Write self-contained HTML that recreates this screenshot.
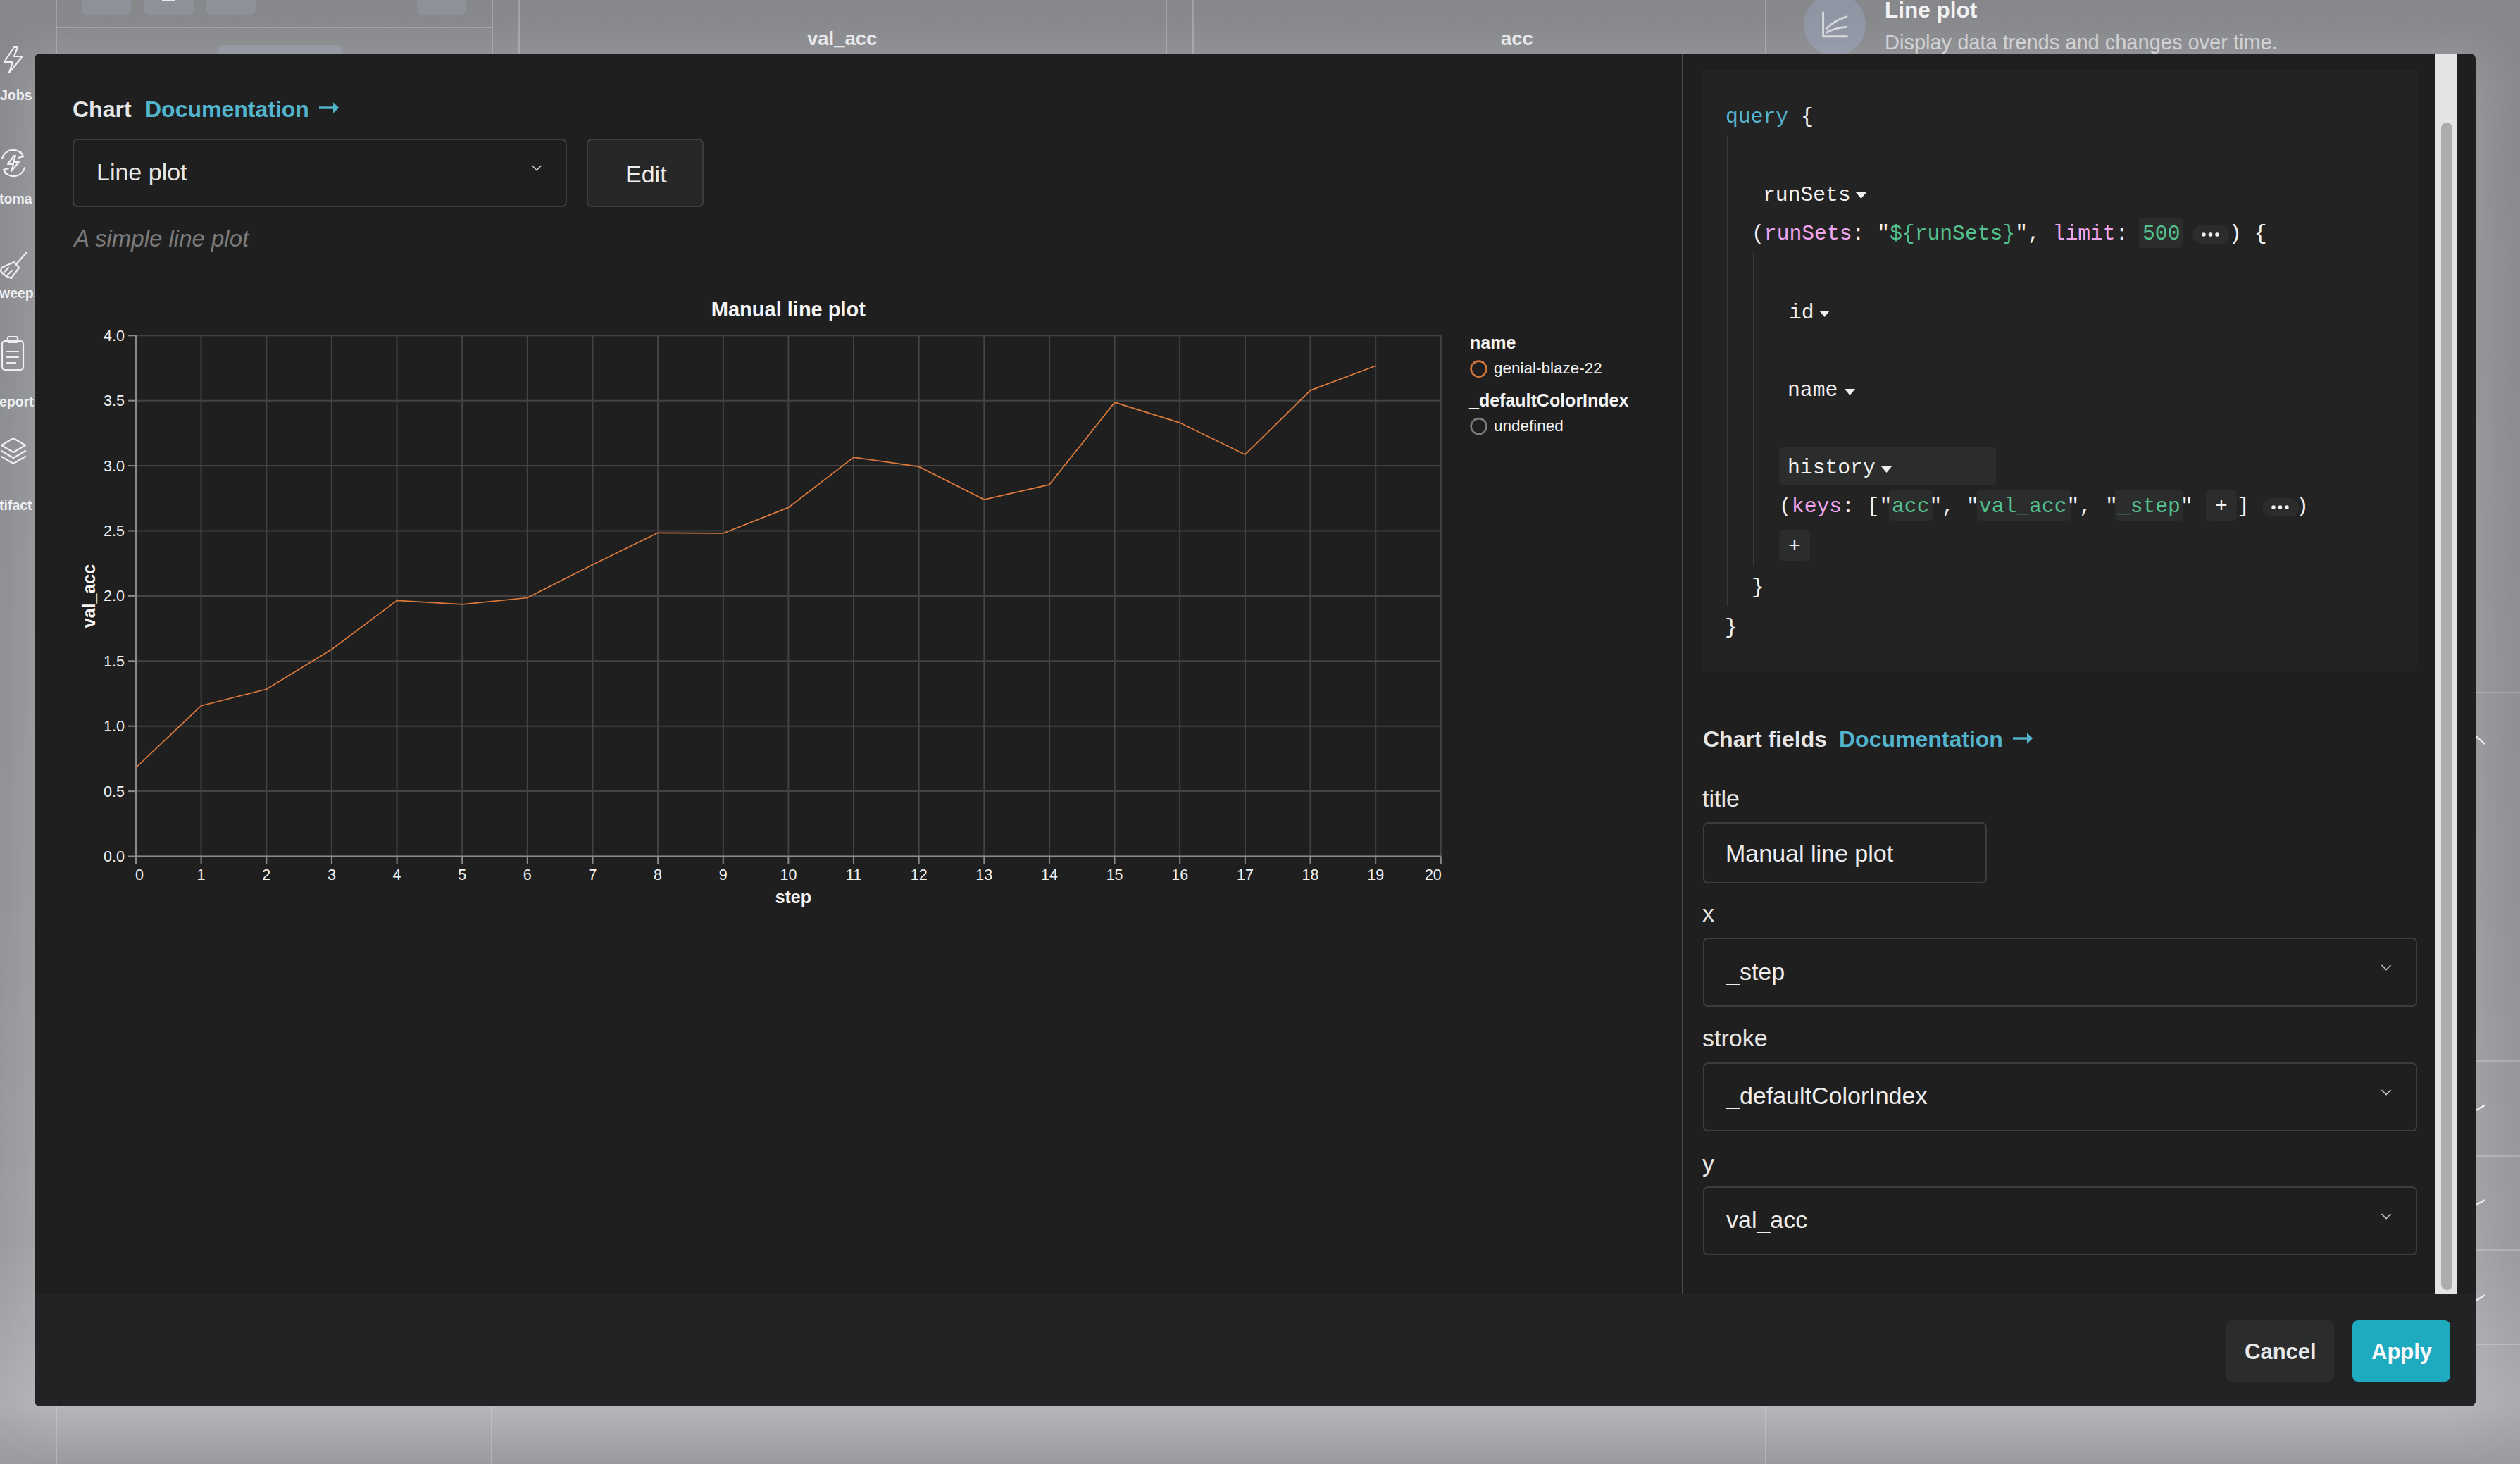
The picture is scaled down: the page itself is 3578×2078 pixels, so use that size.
<!DOCTYPE html>
<html><head><meta charset="utf-8"><title>Chart editor</title>
<style>
html,body{margin:0;padding:0;}
body{width:3578px;height:2078px;overflow:hidden;position:relative;font-family:'Liberation Sans', sans-serif;
background:linear-gradient(to bottom,#87888c 0%,#8b8c90 30%,#909195 60%,#999a9e 85%,#abacb0 96%,#9a9b9f 100%);}
.t{position:absolute;line-height:1;white-space:pre;}
.r{position:absolute;}
.bgpage{position:absolute;left:0;top:0;width:3578px;height:2078px;}
</style></head><body>
<div class="bgpage"><div class="r" style="left:79.0px;top:0.0px;width:2.0px;height:76.0px;background:rgba(230,232,238,0.28);border-radius:0px;"></div><div class="r" style="left:698.0px;top:0.0px;width:2.0px;height:76.0px;background:rgba(230,232,238,0.28);border-radius:0px;"></div><div class="r" style="left:736.0px;top:0.0px;width:2.0px;height:76.0px;background:rgba(230,232,238,0.28);border-radius:0px;"></div><div class="r" style="left:1655.0px;top:0.0px;width:2.0px;height:76.0px;background:rgba(230,232,238,0.28);border-radius:0px;"></div><div class="r" style="left:1693.0px;top:0.0px;width:2.0px;height:76.0px;background:rgba(230,232,238,0.28);border-radius:0px;"></div><div class="r" style="left:2506.0px;top:0.0px;width:2.0px;height:76.0px;background:rgba(230,232,238,0.28);border-radius:0px;"></div><div class="r" style="left:79.0px;top:1996.0px;width:2.0px;height:82.0px;background:rgba(230,232,238,0.28);border-radius:0px;"></div><div class="r" style="left:697.0px;top:1996.0px;width:2.0px;height:82.0px;background:rgba(230,232,238,0.28);border-radius:0px;"></div><div class="r" style="left:2506.0px;top:1996.0px;width:2.0px;height:82.0px;background:rgba(230,232,238,0.28);border-radius:0px;"></div><div class="r" style="left:79.0px;top:38.0px;width:619.0px;height:2.0px;background:rgba(230,232,238,0.28);border-radius:0px;"></div><div class="r" style="left:116.0px;top:-10.0px;width:70.0px;height:31.0px;background:rgba(160,165,185,0.32);border-radius:8px;"></div><div class="r" style="left:204.0px;top:-10.0px;width:71.0px;height:31.0px;background:rgba(160,165,185,0.32);border-radius:8px;"></div><div class="r" style="left:292.0px;top:-10.0px;width:71.0px;height:31.0px;background:rgba(160,165,185,0.32);border-radius:8px;"></div><div class="r" style="left:592.0px;top:-10.0px;width:69.0px;height:31.0px;background:rgba(160,165,185,0.32);border-radius:8px;"></div><div class="r" style="left:230.0px;top:-2.0px;width:18.0px;height:4.0px;background:#e8e8e8;border-radius:0px;"></div><div class="r" style="left:309.0px;top:64.0px;width:177.0px;height:26.0px;background:rgba(160,165,185,0.35);border-radius:8px;"></div><div class="t" style="left:1146.0px;top:40.7px;font-size:27.5px;color:#e6e7ea;font-weight:bold;font-style:normal;font-family:'Liberation Sans', sans-serif;">val_acc</div><div class="t" style="left:2131.0px;top:40.7px;font-size:27.5px;color:#e6e7ea;font-weight:bold;font-style:normal;font-family:'Liberation Sans', sans-serif;">acc</div><svg class="r" style="left:2561px;top:-9px" width="88" height="88" viewBox="0 0 88 88"><circle cx="44" cy="44" r="44" fill="#8f95a3"/><path d="M27.6 26.8 V60.7 H61.5 M32.6 49.6 C 40 42, 48 36, 60.9 32.8 M32.6 55 C 42 50, 50 48, 60.9 47.4" fill="none" stroke="#d6d8dc" stroke-width="2.9" stroke-linecap="round" stroke-linejoin="round"/></svg><div class="t" style="left:2676.0px;top:-0.7px;font-size:31.5px;color:#f2f2f4;font-weight:bold;font-style:normal;font-family:'Liberation Sans', sans-serif;">Line plot</div><div class="t" style="left:2676.0px;top:46.1px;font-size:29px;color:#cfd0d3;font-weight:normal;font-style:normal;font-family:'Liberation Sans', sans-serif;">Display data trends and changes over time.</div><div class="t" style="left:0.0px;top:126.0px;font-size:19.5px;color:#eeeff1;font-weight:bold;font-style:normal;font-family:'Liberation Sans', sans-serif;">Jobs</div><div class="t" style="left:-1.0px;top:272.5px;font-size:19.5px;color:#eeeff1;font-weight:bold;font-style:normal;font-family:'Liberation Sans', sans-serif;">toma</div><div class="t" style="left:-1.0px;top:406.9px;font-size:19.5px;color:#eeeff1;font-weight:bold;font-style:normal;font-family:'Liberation Sans', sans-serif;">weeps</div><div class="t" style="left:-1.0px;top:561.2px;font-size:19.5px;color:#eeeff1;font-weight:bold;font-style:normal;font-family:'Liberation Sans', sans-serif;">eports</div><div class="t" style="left:-1.0px;top:707.5px;font-size:19.5px;color:#eeeff1;font-weight:bold;font-style:normal;font-family:'Liberation Sans', sans-serif;">tifact</div><svg class="r" style="left:0;top:60px" width="50" height="620" viewBox="0 60 50 620" fill="none" stroke="#eeeff1" stroke-width="2.2" stroke-linejoin="round" stroke-linecap="round"><path d="M20 67 L6 88 H18 L13 103 L32 80 H20 L25 67 Z"/><path d="M3 225 A16 16 0 0 1 33 222 M35 238 A16 16 0 0 1 5 241 M29 215 L33 222 L26 224 M9 248 L5 241 L12 239"/><path d="M20 221 L11 233 H19 L16 243 L27 230 H19 L22 221 Z"/><path d="M38 358 L22 376 M2 380 L20 372 L27 380 L16 395 Q6 392 1 385 Z M6 386 L12 380 M11 390 L17 384"/><rect x="3" y="484" width="30" height="41" rx="4"/><rect x="11" y="478" width="14" height="8" rx="2"/><path d="M10 499 H26 M10 507 H26 M10 515 H22"/><path d="M19 622 L36 632 L19 642 L2 632 Z M2 640 L19 650 L36 640 M2 648 L19 658 L36 648"/></svg><div class="r" style="left:3515.0px;top:982.0px;width:63.0px;height:2.0px;background:rgba(230,232,238,0.28);border-radius:0px;"></div><div class="r" style="left:3515.0px;top:1505.0px;width:63.0px;height:2.0px;background:rgba(230,232,238,0.28);border-radius:0px;"></div><div class="r" style="left:3515.0px;top:1640.0px;width:63.0px;height:2.0px;background:rgba(230,232,238,0.28);border-radius:0px;"></div><div class="r" style="left:3515.0px;top:1773.0px;width:63.0px;height:2.0px;background:rgba(230,232,238,0.28);border-radius:0px;"></div><div class="r" style="left:3515.0px;top:1907.0px;width:63.0px;height:2.0px;background:rgba(230,232,238,0.28);border-radius:0px;"></div><svg class="r" style="left:3515px;top:1030px" width="63" height="830" viewBox="3515 1030 63 830" fill="none" stroke="#eeeff1" stroke-width="2.4" stroke-linecap="round" stroke-linejoin="round"><path d="M3515 1049 L3517 1046 L3527 1055.5"/><path d="M3515.5 1576 L3517 1575 L3527.5 1569"/><path d="M3515.5 1710.5 L3517 1709.5 L3527.5 1703.5"/><path d="M3515.5 1846 L3517 1845 L3527.5 1838.5"/></svg></div><div class="r" style="left:49.0px;top:76.0px;width:3466.0px;height:1920.0px;background:#1f1f1f;border-radius:8px;box-shadow:0 14px 70px 16px rgba(255,255,255,0.16);"></div><div class="r" style="left:49.0px;top:1837.0px;width:3466.0px;height:159.0px;background:#222325;border-radius:0px;border-radius:0 0 8px 8px;"></div><div class="r" style="left:49.0px;top:1836.0px;width:3466.0px;height:1.0px;background:#565656;border-radius:0px;"></div><div class="r" style="left:2388.0px;top:76.0px;width:2.0px;height:1761.0px;background:#4a4a4a;border-radius:0px;"></div><div class="t" style="left:103.0px;top:138.9px;font-size:32px;color:#e6e6e6;font-weight:bold;font-style:normal;font-family:'Liberation Sans', sans-serif;">Chart</div><div class="t" style="left:206.0px;top:138.9px;font-size:32px;color:#52b4cd;font-weight:bold;font-style:normal;font-family:'Liberation Sans', sans-serif;">Documentation</div><svg class="r" style="left:453px;top:145.3px" width="29" height="16" viewBox="0 0 29 16"><rect x="0" y="6.3" width="21" height="3.4" fill="#52b4cd"/><path d="M20 0.3 L28.2 8 L20 15.7 Z" fill="#52b4cd"/></svg><div class="r" style="left:103.0px;top:197.0px;width:702.0px;height:97.0px;background:#1f1f1f;border:2px solid #3d3d3d;box-sizing:border-box;border-radius:7px;"></div><div class="t" style="left:137.0px;top:226.6px;font-size:34px;color:#e8e8e8;font-weight:normal;font-style:normal;font-family:'Liberation Sans', sans-serif;">Line plot</div><svg class="r" style="left:750px;top:228px" width="24" height="20" viewBox="0 0 24 20"><path d="M5.5 7 L12 13.5 L18.5 7" fill="none" stroke="#c8c8c8" stroke-width="1.6"/></svg><div class="r" style="left:833.0px;top:197.0px;width:166.0px;height:97.0px;background:#262828;border:2px solid #3d3d3d;box-sizing:border-box;border-radius:7px;"></div><div class="t" style="left:888.0px;top:229.6px;font-size:34px;color:#eeeeee;font-weight:normal;font-style:normal;font-family:'Liberation Sans', sans-serif;">Edit</div><div class="t" style="left:105.0px;top:322.1px;font-size:33px;color:#7a7a7a;font-weight:normal;font-style:italic;font-family:'Liberation Sans', sans-serif;">A simple line plot</div><svg class="r" style="left:0;top:0" width="2389" height="1400" viewBox="0 0 2389 1400"><line x1="193.0" y1="476" x2="193.0" y2="1215.5" stroke="#434343" stroke-width="2"/><line x1="285.6" y1="476" x2="285.6" y2="1215.5" stroke="#434343" stroke-width="2"/><line x1="378.3" y1="476" x2="378.3" y2="1215.5" stroke="#434343" stroke-width="2"/><line x1="470.9" y1="476" x2="470.9" y2="1215.5" stroke="#434343" stroke-width="2"/><line x1="563.6" y1="476" x2="563.6" y2="1215.5" stroke="#434343" stroke-width="2"/><line x1="656.2" y1="476" x2="656.2" y2="1215.5" stroke="#434343" stroke-width="2"/><line x1="748.8" y1="476" x2="748.8" y2="1215.5" stroke="#434343" stroke-width="2"/><line x1="841.5" y1="476" x2="841.5" y2="1215.5" stroke="#434343" stroke-width="2"/><line x1="934.1" y1="476" x2="934.1" y2="1215.5" stroke="#434343" stroke-width="2"/><line x1="1026.8" y1="476" x2="1026.8" y2="1215.5" stroke="#434343" stroke-width="2"/><line x1="1119.4" y1="476" x2="1119.4" y2="1215.5" stroke="#434343" stroke-width="2"/><line x1="1212.0" y1="476" x2="1212.0" y2="1215.5" stroke="#434343" stroke-width="2"/><line x1="1304.7" y1="476" x2="1304.7" y2="1215.5" stroke="#434343" stroke-width="2"/><line x1="1397.3" y1="476" x2="1397.3" y2="1215.5" stroke="#434343" stroke-width="2"/><line x1="1490.0" y1="476" x2="1490.0" y2="1215.5" stroke="#434343" stroke-width="2"/><line x1="1582.6" y1="476" x2="1582.6" y2="1215.5" stroke="#434343" stroke-width="2"/><line x1="1675.2" y1="476" x2="1675.2" y2="1215.5" stroke="#434343" stroke-width="2"/><line x1="1767.9" y1="476" x2="1767.9" y2="1215.5" stroke="#434343" stroke-width="2"/><line x1="1860.5" y1="476" x2="1860.5" y2="1215.5" stroke="#434343" stroke-width="2"/><line x1="1953.2" y1="476" x2="1953.2" y2="1215.5" stroke="#434343" stroke-width="2"/><line x1="2045.8" y1="476" x2="2045.8" y2="1215.5" stroke="#434343" stroke-width="2"/><line x1="193" y1="1215.5" x2="2046" y2="1215.5" stroke="#434343" stroke-width="2"/><line x1="193" y1="1123.1" x2="2046" y2="1123.1" stroke="#434343" stroke-width="2"/><line x1="193" y1="1030.7" x2="2046" y2="1030.7" stroke="#434343" stroke-width="2"/><line x1="193" y1="938.3" x2="2046" y2="938.3" stroke="#434343" stroke-width="2"/><line x1="193" y1="845.9" x2="2046" y2="845.9" stroke="#434343" stroke-width="2"/><line x1="193" y1="753.5" x2="2046" y2="753.5" stroke="#434343" stroke-width="2"/><line x1="193" y1="661.1" x2="2046" y2="661.1" stroke="#434343" stroke-width="2"/><line x1="193" y1="568.7" x2="2046" y2="568.7" stroke="#434343" stroke-width="2"/><line x1="193" y1="476.3" x2="2046" y2="476.3" stroke="#434343" stroke-width="2"/><line x1="193" y1="475" x2="193" y2="1216.5" stroke="#8a8a8a" stroke-width="2"/><line x1="192" y1="1215.5" x2="2046" y2="1215.5" stroke="#8a8a8a" stroke-width="2"/><line x1="182" y1="1215.5" x2="193" y2="1215.5" stroke="#8a8a8a" stroke-width="2"/><text x="177" y="1223.0" text-anchor="end" font-family="Liberation Sans" font-size="21.5" fill="#f2f2f2">0.0</text><line x1="182" y1="1123.1" x2="193" y2="1123.1" stroke="#8a8a8a" stroke-width="2"/><text x="177" y="1130.6" text-anchor="end" font-family="Liberation Sans" font-size="21.5" fill="#f2f2f2">0.5</text><line x1="182" y1="1030.7" x2="193" y2="1030.7" stroke="#8a8a8a" stroke-width="2"/><text x="177" y="1038.2" text-anchor="end" font-family="Liberation Sans" font-size="21.5" fill="#f2f2f2">1.0</text><line x1="182" y1="938.3" x2="193" y2="938.3" stroke="#8a8a8a" stroke-width="2"/><text x="177" y="945.8" text-anchor="end" font-family="Liberation Sans" font-size="21.5" fill="#f2f2f2">1.5</text><line x1="182" y1="845.9" x2="193" y2="845.9" stroke="#8a8a8a" stroke-width="2"/><text x="177" y="853.4" text-anchor="end" font-family="Liberation Sans" font-size="21.5" fill="#f2f2f2">2.0</text><line x1="182" y1="753.5" x2="193" y2="753.5" stroke="#8a8a8a" stroke-width="2"/><text x="177" y="761.0" text-anchor="end" font-family="Liberation Sans" font-size="21.5" fill="#f2f2f2">2.5</text><line x1="182" y1="661.1" x2="193" y2="661.1" stroke="#8a8a8a" stroke-width="2"/><text x="177" y="668.6" text-anchor="end" font-family="Liberation Sans" font-size="21.5" fill="#f2f2f2">3.0</text><line x1="182" y1="568.7" x2="193" y2="568.7" stroke="#8a8a8a" stroke-width="2"/><text x="177" y="576.2" text-anchor="end" font-family="Liberation Sans" font-size="21.5" fill="#f2f2f2">3.5</text><line x1="182" y1="476.3" x2="193" y2="476.3" stroke="#8a8a8a" stroke-width="2"/><text x="177" y="483.8" text-anchor="end" font-family="Liberation Sans" font-size="21.5" fill="#f2f2f2">4.0</text><line x1="193.0" y1="1215.5" x2="193.0" y2="1226" stroke="#8a8a8a" stroke-width="2"/><text x="192.0" y="1249" text-anchor="start" font-family="Liberation Sans" font-size="21.5" fill="#f2f2f2">0</text><line x1="285.6" y1="1215.5" x2="285.6" y2="1226" stroke="#8a8a8a" stroke-width="2"/><text x="285.6" y="1249" text-anchor="middle" font-family="Liberation Sans" font-size="21.5" fill="#f2f2f2">1</text><line x1="378.3" y1="1215.5" x2="378.3" y2="1226" stroke="#8a8a8a" stroke-width="2"/><text x="378.3" y="1249" text-anchor="middle" font-family="Liberation Sans" font-size="21.5" fill="#f2f2f2">2</text><line x1="470.9" y1="1215.5" x2="470.9" y2="1226" stroke="#8a8a8a" stroke-width="2"/><text x="470.9" y="1249" text-anchor="middle" font-family="Liberation Sans" font-size="21.5" fill="#f2f2f2">3</text><line x1="563.6" y1="1215.5" x2="563.6" y2="1226" stroke="#8a8a8a" stroke-width="2"/><text x="563.6" y="1249" text-anchor="middle" font-family="Liberation Sans" font-size="21.5" fill="#f2f2f2">4</text><line x1="656.2" y1="1215.5" x2="656.2" y2="1226" stroke="#8a8a8a" stroke-width="2"/><text x="656.2" y="1249" text-anchor="middle" font-family="Liberation Sans" font-size="21.5" fill="#f2f2f2">5</text><line x1="748.8" y1="1215.5" x2="748.8" y2="1226" stroke="#8a8a8a" stroke-width="2"/><text x="748.8" y="1249" text-anchor="middle" font-family="Liberation Sans" font-size="21.5" fill="#f2f2f2">6</text><line x1="841.5" y1="1215.5" x2="841.5" y2="1226" stroke="#8a8a8a" stroke-width="2"/><text x="841.5" y="1249" text-anchor="middle" font-family="Liberation Sans" font-size="21.5" fill="#f2f2f2">7</text><line x1="934.1" y1="1215.5" x2="934.1" y2="1226" stroke="#8a8a8a" stroke-width="2"/><text x="934.1" y="1249" text-anchor="middle" font-family="Liberation Sans" font-size="21.5" fill="#f2f2f2">8</text><line x1="1026.8" y1="1215.5" x2="1026.8" y2="1226" stroke="#8a8a8a" stroke-width="2"/><text x="1026.8" y="1249" text-anchor="middle" font-family="Liberation Sans" font-size="21.5" fill="#f2f2f2">9</text><line x1="1119.4" y1="1215.5" x2="1119.4" y2="1226" stroke="#8a8a8a" stroke-width="2"/><text x="1119.4" y="1249" text-anchor="middle" font-family="Liberation Sans" font-size="21.5" fill="#f2f2f2">10</text><line x1="1212.0" y1="1215.5" x2="1212.0" y2="1226" stroke="#8a8a8a" stroke-width="2"/><text x="1212.0" y="1249" text-anchor="middle" font-family="Liberation Sans" font-size="21.5" fill="#f2f2f2">11</text><line x1="1304.7" y1="1215.5" x2="1304.7" y2="1226" stroke="#8a8a8a" stroke-width="2"/><text x="1304.7" y="1249" text-anchor="middle" font-family="Liberation Sans" font-size="21.5" fill="#f2f2f2">12</text><line x1="1397.3" y1="1215.5" x2="1397.3" y2="1226" stroke="#8a8a8a" stroke-width="2"/><text x="1397.3" y="1249" text-anchor="middle" font-family="Liberation Sans" font-size="21.5" fill="#f2f2f2">13</text><line x1="1490.0" y1="1215.5" x2="1490.0" y2="1226" stroke="#8a8a8a" stroke-width="2"/><text x="1490.0" y="1249" text-anchor="middle" font-family="Liberation Sans" font-size="21.5" fill="#f2f2f2">14</text><line x1="1582.6" y1="1215.5" x2="1582.6" y2="1226" stroke="#8a8a8a" stroke-width="2"/><text x="1582.6" y="1249" text-anchor="middle" font-family="Liberation Sans" font-size="21.5" fill="#f2f2f2">15</text><line x1="1675.2" y1="1215.5" x2="1675.2" y2="1226" stroke="#8a8a8a" stroke-width="2"/><text x="1675.2" y="1249" text-anchor="middle" font-family="Liberation Sans" font-size="21.5" fill="#f2f2f2">16</text><line x1="1767.9" y1="1215.5" x2="1767.9" y2="1226" stroke="#8a8a8a" stroke-width="2"/><text x="1767.9" y="1249" text-anchor="middle" font-family="Liberation Sans" font-size="21.5" fill="#f2f2f2">17</text><line x1="1860.5" y1="1215.5" x2="1860.5" y2="1226" stroke="#8a8a8a" stroke-width="2"/><text x="1860.5" y="1249" text-anchor="middle" font-family="Liberation Sans" font-size="21.5" fill="#f2f2f2">18</text><line x1="1953.2" y1="1215.5" x2="1953.2" y2="1226" stroke="#8a8a8a" stroke-width="2"/><text x="1953.2" y="1249" text-anchor="middle" font-family="Liberation Sans" font-size="21.5" fill="#f2f2f2">19</text><line x1="2045.8" y1="1215.5" x2="2045.8" y2="1226" stroke="#8a8a8a" stroke-width="2"/><text x="2046.8" y="1249" text-anchor="end" font-family="Liberation Sans" font-size="21.5" fill="#f2f2f2">20</text><polyline points="193.0,1089.5 285.6,1001.7 378.3,978.2 470.9,921.7 563.6,852.4 656.2,857.9 748.8,848.5 841.5,801.5 934.1,756.3 1026.8,757.0 1119.4,720.4 1212.0,649.1 1304.7,662.4 1397.3,709.1 1490.0,687.9 1582.6,571.1 1675.2,600.1 1767.9,645.2 1860.5,554.1 1953.2,519.2" fill="none" stroke="#dc7a3c" stroke-width="1.7"/><text x="1119.4" y="449" text-anchor="middle" font-family="Liberation Sans" font-weight="bold" font-size="29" fill="#f5f5f5">Manual line plot</text><text x="1119.4" y="1282" text-anchor="middle" font-family="Liberation Sans" font-weight="bold" font-size="25" fill="#f5f5f5">_step</text><text transform="translate(135,846) rotate(-90)" x="0" y="0" text-anchor="middle" font-family="Liberation Sans" font-weight="bold" font-size="25" fill="#f5f5f5">val_acc</text><text x="2087" y="495" font-family="Liberation Sans" font-weight="bold" font-size="25" fill="#f5f5f5">name</text><circle cx="2099.6" cy="523.6" r="11" fill="none" stroke="#d2773a" stroke-width="2.6"/><text x="2121" y="529.7" font-family="Liberation Sans" font-size="22.5" fill="#f2f2f2">genial-blaze-22</text><text x="2086" y="577.3" font-family="Liberation Sans" font-weight="bold" font-size="25" fill="#f5f5f5">_defaultColorIndex</text><circle cx="2099.6" cy="605.1" r="11" fill="none" stroke="#7d7d7d" stroke-width="2.6"/><text x="2121" y="611.5" font-family="Liberation Sans" font-size="22.5" fill="#f2f2f2">undefined</text></svg><div class="r" style="left:2417.0px;top:99.0px;width:1015.0px;height:853.0px;background:#232323;border-radius:0px;"></div><div class="r" style="left:2452.0px;top:191.0px;width:2.0px;height:669.0px;background:#3a3a3a;border-radius:0px;"></div><div class="r" style="left:2489.0px;top:358.0px;width:2.0px;height:444.0px;background:#3a3a3a;border-radius:0px;"></div><div class="t" style="left:2450.0px;top:152.2px;font-size:29.7px;color:#f2f2f2;font-weight:normal;font-style:normal;font-family:'Liberation Mono', monospace;white-space:pre;"><span style="color:#55b3d3">query</span> {</div><div class="t" style="left:2503.0px;top:262.8px;font-size:29.7px;color:#f2f2f2;font-weight:normal;font-style:normal;font-family:'Liberation Mono', monospace;white-space:pre;">runSets</div><svg class="r" style="left:2635px;top:273px" width="15" height="9" viewBox="0 0 15 9"><path d="M0 0 H15 L7.5 9 Z" fill="#f0f0f0"/></svg><div class="t" style="left:2487.0px;top:318.2px;font-size:29.7px;color:#f2f2f2;font-weight:normal;font-style:normal;font-family:'Liberation Mono', monospace;white-space:pre;">(<span style="color:#f0a6ee">runSets</span>: "<span style="color:#55c08e">${runSets}</span>", <span style="color:#f0a6ee">limit</span>:</div><div class="r" style="left:3037.0px;top:308.5px;width:62.0px;height:43.0px;background:#2b2c2c;border-radius:5px;"></div><div class="t" style="left:3042.0px;top:318.2px;font-size:29.7px;color:#f2f2f2;font-weight:normal;font-style:normal;font-family:'Liberation Mono', monospace;white-space:pre;"><span style="color:#55c08e">500</span></div><div class="r" style="left:3113.0px;top:320.0px;width:52.0px;height:26.0px;background:#2b2c2c;border-radius:13px;"></div><svg class="r" style="left:3113px;top:320px" width="52" height="26" viewBox="0 0 52 26"><circle cx="16" cy="13" r="2.8" fill="#f0f0f0"/><circle cx="25.5" cy="13" r="2.8" fill="#f0f0f0"/><circle cx="35" cy="13" r="2.8" fill="#f0f0f0"/></svg><div class="t" style="left:3165.0px;top:318.2px;font-size:29.7px;color:#f2f2f2;font-weight:normal;font-style:normal;font-family:'Liberation Mono', monospace;white-space:pre;">) {</div><div class="t" style="left:2540.0px;top:429.5px;font-size:29.7px;color:#f2f2f2;font-weight:normal;font-style:normal;font-family:'Liberation Mono', monospace;white-space:pre;">id</div><svg class="r" style="left:2583px;top:441px" width="15" height="9" viewBox="0 0 15 9"><path d="M0 0 H15 L7.5 9 Z" fill="#f0f0f0"/></svg><div class="t" style="left:2538.0px;top:540.2px;font-size:29.7px;color:#f2f2f2;font-weight:normal;font-style:normal;font-family:'Liberation Mono', monospace;white-space:pre;">name</div><svg class="r" style="left:2619px;top:552px" width="15" height="9" viewBox="0 0 15 9"><path d="M0 0 H15 L7.5 9 Z" fill="#f0f0f0"/></svg><div class="r" style="left:2526.0px;top:635.0px;width:308.0px;height:53.0px;background:#2b2c2c;border-radius:5px;"></div><div class="t" style="left:2538.0px;top:649.8px;font-size:29.7px;color:#f2f2f2;font-weight:normal;font-style:normal;font-family:'Liberation Mono', monospace;white-space:pre;">history</div><svg class="r" style="left:2671px;top:662px" width="15" height="9" viewBox="0 0 15 9"><path d="M0 0 H15 L7.5 9 Z" fill="#f0f0f0"/></svg><div class="r" style="left:2682.0px;top:695.0px;width:62.0px;height:43.5px;background:#2b2c2c;border-radius:5px;"></div><div class="r" style="left:2807.0px;top:695.0px;width:133.0px;height:43.5px;background:#2b2c2c;border-radius:5px;"></div><div class="r" style="left:3003.0px;top:695.0px;width:97.0px;height:43.5px;background:#2b2c2c;border-radius:5px;"></div><div class="r" style="left:3132.0px;top:695.0px;width:44.0px;height:43.5px;background:#2b2c2c;border-radius:5px;"></div><div class="t" style="left:2526.0px;top:705.2px;font-size:29.7px;color:#f2f2f2;font-weight:normal;font-style:normal;font-family:'Liberation Mono', monospace;white-space:pre;">(<span style="color:#f0a6ee">keys</span>: ["</div><div class="t" style="left:2686.0px;top:705.2px;font-size:29.7px;color:#f2f2f2;font-weight:normal;font-style:normal;font-family:'Liberation Mono', monospace;white-space:pre;"><span style="color:#55c08e">acc</span>",</div><div class="t" style="left:2792.0px;top:705.2px;font-size:29.7px;color:#f2f2f2;font-weight:normal;font-style:normal;font-family:'Liberation Mono', monospace;white-space:pre;">"<span style="color:#55c08e">val_acc</span>",</div><div class="t" style="left:2989.0px;top:705.2px;font-size:29.7px;color:#f2f2f2;font-weight:normal;font-style:normal;font-family:'Liberation Mono', monospace;white-space:pre;">"<span style="color:#55c08e">_step</span>"</div><div class="t" style="left:3145.0px;top:705.2px;font-size:29.7px;color:#f2f2f2;font-weight:normal;font-style:normal;font-family:'Liberation Mono', monospace;white-space:pre;">+</div><div class="t" style="left:3176.0px;top:705.2px;font-size:29.7px;color:#f2f2f2;font-weight:normal;font-style:normal;font-family:'Liberation Mono', monospace;white-space:pre;">]</div><div class="r" style="left:3212.0px;top:707.0px;width:52.0px;height:26.0px;background:#2b2c2c;border-radius:13px;"></div><svg class="r" style="left:3212px;top:707px" width="52" height="26" viewBox="0 0 52 26"><circle cx="16" cy="13" r="2.8" fill="#f0f0f0"/><circle cx="25.5" cy="13" r="2.8" fill="#f0f0f0"/><circle cx="35" cy="13" r="2.8" fill="#f0f0f0"/></svg><div class="t" style="left:3260.0px;top:705.2px;font-size:29.7px;color:#f2f2f2;font-weight:normal;font-style:normal;font-family:'Liberation Mono', monospace;white-space:pre;">)</div><div class="r" style="left:2526.0px;top:752.0px;width:44.0px;height:44.0px;background:#2b2c2c;border-radius:5px;"></div><div class="t" style="left:2539.0px;top:762.2px;font-size:29.7px;color:#f2f2f2;font-weight:normal;font-style:normal;font-family:'Liberation Mono', monospace;white-space:pre;">+</div><div class="t" style="left:2487.0px;top:820.2px;font-size:29.7px;color:#f2f2f2;font-weight:normal;font-style:normal;font-family:'Liberation Mono', monospace;white-space:pre;">}</div><div class="t" style="left:2449.0px;top:876.9px;font-size:29.7px;color:#f2f2f2;font-weight:normal;font-style:normal;font-family:'Liberation Mono', monospace;white-space:pre;">}</div><div class="t" style="left:2418.0px;top:1033.2px;font-size:32px;color:#e6e6e6;font-weight:bold;font-style:normal;font-family:'Liberation Sans', sans-serif;">Chart fields</div><div class="t" style="left:2611.0px;top:1033.2px;font-size:32px;color:#52b4cd;font-weight:bold;font-style:normal;font-family:'Liberation Sans', sans-serif;">Documentation</div><svg class="r" style="left:2858px;top:1039.6px" width="29" height="16" viewBox="0 0 29 16"><rect x="0" y="6.3" width="21" height="3.4" fill="#52b4cd"/><path d="M20 0.3 L28.2 8 L20 15.7 Z" fill="#52b4cd"/></svg><div class="t" style="left:2417.0px;top:1115.8px;font-size:34px;color:#e6e6e6;font-weight:normal;font-style:normal;font-family:'Liberation Sans', sans-serif;">title</div><div class="r" style="left:2418.0px;top:1166.5px;width:403.0px;height:87.0px;background:#1f1f1f;border:2px solid #3d3d3d;box-sizing:border-box;border-radius:7px;"></div><div class="t" style="left:2450.0px;top:1193.9px;font-size:34px;color:#eeeeee;font-weight:normal;font-style:normal;font-family:'Liberation Sans', sans-serif;">Manual line plot</div><div class="t" style="left:2417.0px;top:1279.1px;font-size:34px;color:#e6e6e6;font-weight:normal;font-style:normal;font-family:'Liberation Sans', sans-serif;">x</div><div class="r" style="left:2418.0px;top:1331.0px;width:1014.0px;height:98.0px;background:#1f1f1f;border:2px solid #3d3d3d;box-sizing:border-box;border-radius:7px;"></div><div class="t" style="left:2451.0px;top:1362.0px;font-size:34px;color:#eeeeee;font-weight:normal;font-style:normal;font-family:'Liberation Sans', sans-serif;">_step</div><svg class="r" style="left:3376px;top:1362.8px" width="24" height="20" viewBox="0 0 24 20"><path d="M5.5 7 L12 13.5 L18.5 7" fill="none" stroke="#c8c8c8" stroke-width="1.6"/></svg><div class="t" style="left:2417.0px;top:1456.2px;font-size:34px;color:#e6e6e6;font-weight:normal;font-style:normal;font-family:'Liberation Sans', sans-serif;">stroke</div><div class="r" style="left:2418.0px;top:1508.0px;width:1014.0px;height:98.0px;background:#1f1f1f;border:2px solid #3d3d3d;box-sizing:border-box;border-radius:7px;"></div><div class="t" style="left:2451.0px;top:1537.8px;font-size:34px;color:#eeeeee;font-weight:normal;font-style:normal;font-family:'Liberation Sans', sans-serif;">_defaultColorIndex</div><svg class="r" style="left:3376px;top:1539.8px" width="24" height="20" viewBox="0 0 24 20"><path d="M5.5 7 L12 13.5 L18.5 7" fill="none" stroke="#c8c8c8" stroke-width="1.6"/></svg><div class="t" style="left:2417.0px;top:1633.8px;font-size:34px;color:#e6e6e6;font-weight:normal;font-style:normal;font-family:'Liberation Sans', sans-serif;">y</div><div class="r" style="left:2418.0px;top:1684.0px;width:1014.0px;height:97.5px;background:#1f1f1f;border:2px solid #3d3d3d;box-sizing:border-box;border-radius:7px;"></div><div class="t" style="left:2451.0px;top:1713.7px;font-size:34px;color:#eeeeee;font-weight:normal;font-style:normal;font-family:'Liberation Sans', sans-serif;">val_acc</div><svg class="r" style="left:3376px;top:1715.5px" width="24" height="20" viewBox="0 0 24 20"><path d="M5.5 7 L12 13.5 L18.5 7" fill="none" stroke="#c8c8c8" stroke-width="1.6"/></svg><div class="r" style="left:3458.0px;top:76.0px;width:30.0px;height:1760.0px;background:#e4e4e6;border-radius:0px;"></div><div class="r" style="left:3466.0px;top:174.0px;width:16.0px;height:1657.0px;background:#adadad;border-radius:8px;"></div><div class="r" style="left:3160.0px;top:1873.5px;width:154.0px;height:87.5px;background:#2b2c2c;border-radius:8px;"></div><div class="t" style="left:3187.0px;top:1903.0px;font-size:31px;color:#e8e8e8;font-weight:bold;font-style:normal;font-family:'Liberation Sans', sans-serif;">Cancel</div><div class="r" style="left:3340.0px;top:1873.5px;width:139.0px;height:87.5px;background:#1eaabf;border-radius:8px;"></div><div class="t" style="left:3367.0px;top:1903.0px;font-size:31px;color:#fafafa;font-weight:bold;font-style:normal;font-family:'Liberation Sans', sans-serif;">Apply</div>
</body></html>
